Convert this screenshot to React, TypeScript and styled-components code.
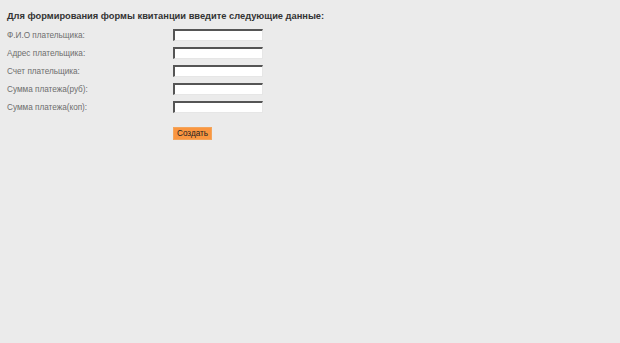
import React from 'react';
import styled, { createGlobalStyle } from 'styled-components';

const GlobalStyle = createGlobalStyle`
    html, body {
        margin: 0;
        padding: 0;
        background-color: #ebebeb;
    }
    body {
        font-family: "Liberation Sans", Arial, sans-serif;
        height: 343px;
    }
`;

const Wrapper = styled.div`
    padding: 10px 7px;
`;

const Title = styled.h1`
    margin: 0 0 4px 0;
    font-size: 9.3px;
    font-weight: bold;
    color: #333;
    line-height: 12px;
    white-space: nowrap;
`;

const Form = styled.form`
    display: grid;
    grid-template-columns: 166px 90px;
    grid-auto-rows: 18px;
    align-items: center;
`;

const Label = styled.label`
    font-size: 8.2px;
    color: #6e6e6e;
    white-space: nowrap;
`;

const Input = styled.input`
    width: 90px;
    height: 12px;
    box-sizing: border-box;
    padding: 0;
    margin: 0;
    background: #fff;
    border-style: solid;
    border-width: 2px 1px 1px 2px;
    border-color: #555 #e6e6e6 #e6e6e6 #555;
`;

const SubmitButton = styled.button`
    grid-column: 2;
    justify-self: start;
    align-self: start;
    margin-top: 11px;
    height: 13px;
    padding: 0 3px;
    border: 1px solid #f3a55c;
    background-color: #fa9640;
    color: #222;
    font-family: "Liberation Sans", Arial, sans-serif;
    font-size: 8.2px;
    line-height: 11px;
    cursor: pointer;
`;

const fields = [
    'Ф.И.О плательщика:',
    'Адрес плательщика:',
    'Счет плательщика:',
    'Сумма платежа(руб):',
    'Сумма платежа(коп):',
];

export default function App(): JSX.Element {
    return (
        <>
            <GlobalStyle />
            <Wrapper>
                <Title>Для формирования формы квитанции введите следующие данные:</Title>
                <Form onSubmit={(e) => e.preventDefault()}>
                    {fields.map((f) => (
                        <React.Fragment key={f}>
                            <Label>{f}</Label>
                            <Input type="text" />
                        </React.Fragment>
                    ))}
                    <SubmitButton type="submit">Создать</SubmitButton>
                </Form>
            </Wrapper>
        </>
    );
}
